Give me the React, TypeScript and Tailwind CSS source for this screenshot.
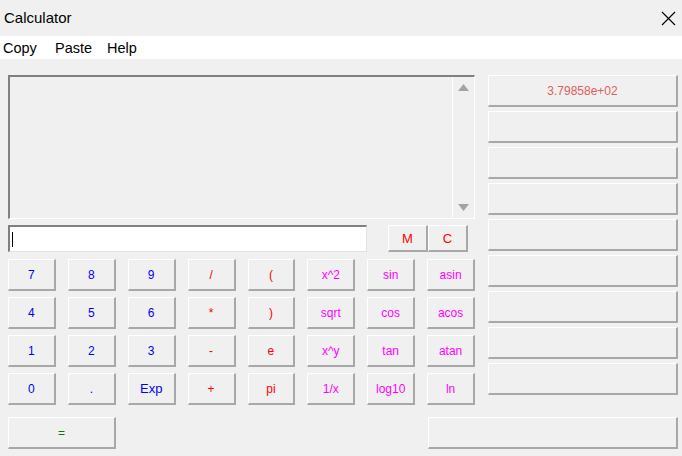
import React from "react";

type Key = { label: string; color: string };

const BLUE = "text-[#0000ff]";
const RED = "text-[#ff0000]";
const PINK = "text-[#ff00ff]";

const keyRows: Key[][] = [
  [
    { label: "7", color: BLUE },
    { label: "8", color: BLUE },
    { label: "9", color: BLUE },
    { label: "/", color: RED },
    { label: "(", color: RED },
    { label: "x^2", color: PINK },
    { label: "sin", color: PINK },
    { label: "asin", color: PINK },
  ],
  [
    { label: "4", color: BLUE },
    { label: "5", color: BLUE },
    { label: "6", color: BLUE },
    { label: "*", color: RED },
    { label: ")", color: RED },
    { label: "sqrt", color: PINK },
    { label: "cos", color: PINK },
    { label: "acos", color: PINK },
  ],
  [
    { label: "1", color: BLUE },
    { label: "2", color: BLUE },
    { label: "3", color: BLUE },
    { label: "-", color: RED },
    { label: "e", color: RED },
    { label: "x^y", color: PINK },
    { label: "tan", color: PINK },
    { label: "atan", color: PINK },
  ],
  [
    { label: "0", color: BLUE },
    { label: ".", color: BLUE },
    { label: "Exp", color: BLUE },
    { label: "+", color: RED },
    { label: "pi", color: RED },
    { label: "1/x", color: PINK },
    { label: "log10", color: PINK },
    { label: "ln", color: PINK },
  ],
];

const history = ["3.79858e+02", "", "", "", "", "", "", "", ""];

function Btn({
  className,
  children,
}: {
  className: string;
  children?: React.ReactNode;
}) {
  return (
    <button
      className={`flex items-center justify-center border-t border-l border-b-2 border-r-2 border-t-white border-l-white border-b-[#a8a8a8] border-r-[#a8a8a8] bg-[#f0f0f0] text-[12px] leading-none ${className}`}
    >
      {children}
    </button>
  );
}

export default function App() {
  return (
    <div className="flex h-[456px] w-[682px] flex-col bg-[#f0f0f0] font-['Liberation_Sans',Arial,sans-serif] text-black">
      <div className="flex h-[36px] items-center justify-between pl-[4px] pr-[5px]">
        <span className="text-[15px]">Calculator</span>
        <svg width="15" height="15" viewBox="0 0 15 15" className="mr-[1px]">
          <path d="M1 1L14 14M14 1L1 14" stroke="#000" strokeWidth="1.2" />
        </svg>
      </div>
      <div className="flex h-[23px] items-center bg-white pl-[3px] pt-[2px] text-[14.5px]">
        <span className="w-[52px]">Copy</span>
        <span className="w-[52px]">Paste</span>
        <span>Help</span>
      </div>

      <div className="flex gap-[13px] pl-[8px] pt-[16px]">
        <div className="flex w-[467px] flex-col">
          <div className="flex h-[144px] border-t-2 border-l-2 border-t-[#808080] border-l-[#808080] border-b border-r border-b-white border-r-white">
            <div className="flex-1" />
            <div className="flex w-[22px] flex-col items-center justify-between border-l border-l-white py-[7px]">
              <svg width="11" height="7" viewBox="0 0 11 7">
                <path d="M5.5 0L11 7H0Z" fill="#a3a3a3" />
              </svg>
              <svg width="11" height="7" viewBox="0 0 11 7">
                <path d="M0 0H11L5.5 7Z" fill="#a3a3a3" />
              </svg>
            </div>
          </div>

          <div className="mt-[6px] flex h-[27px]">
            <div className="flex w-[359px] items-center border-t-2 border-l-2 border-t-[#808080] border-l-[#808080] border-b border-r border-b-[#e3e3e3] border-r-[#e3e3e3] bg-white pl-[2px]">
              <div className="h-[15px] w-[1px] bg-black" />
            </div>
            <Btn className={`ml-[21px] w-[40px] text-[13px] ${RED}`}>M</Btn>
            <Btn className={`w-[40px] text-[13px] ${RED}`}>C</Btn>
          </div>

          <div className="mt-[7px] flex flex-col gap-[6px]">
            {keyRows.map((row, i) => (
              <div key={i} className="flex gap-[12px]">
                {row.map((k) => (
                  <Btn
                    key={k.label}
                    className={`h-[32px] w-[48px] ${k.label === "Exp" ? "text-[13px]" : ""} ${k.color}`}
                  >
                    {k.label}
                  </Btn>
                ))}
              </div>
            ))}
          </div>
        </div>

        <div className="flex w-[190px] flex-col gap-[4px]">
          {history.map((h, i) => (
            <Btn key={i} className="h-[32px] w-full text-[#e35d5d]">
              {h}
            </Btn>
          ))}
        </div>
      </div>

      <div className="mt-[12px] flex pl-[8px]">
        <Btn className="h-[32px] w-[108px] text-[#008000]">=</Btn>
        <Btn className="ml-[312px] h-[32px] w-[250px]" />
      </div>
    </div>
  );
}
